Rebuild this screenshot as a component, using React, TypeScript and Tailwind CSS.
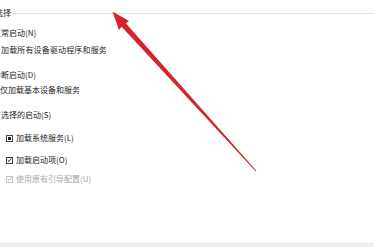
import React from "react";

// msconfig "启动选择" group box, cropped on the left, with a red annotation arrow.
const font = { fontFamily: '"Noto Sans CJK SC", "Noto Sans", sans-serif' };

function Box({ mark, disabled }: { mark: "square" | "check"; disabled?: boolean }) {
  const c = disabled ? "#b4b4b4" : "#333";
  return (
    <span
      className={`inline-flex items-center justify-center w-[7px] h-[7px] border bg-white ${
        disabled ? "border-[#c4c4c4]" : "border-[#444]"
      }`}
    >
      {mark === "square" ? (
        <span className="block w-[3px] h-[3px] bg-[#222]" />
      ) : (
        <svg width="6" height="6" viewBox="0 0 6 6">
          <path d="M0.8 3.1 L2.4 4.7 L5.3 1.1" fill="none" stroke={c} strokeWidth="1.2" />
        </svg>
      )}
    </span>
  );
}

export default function App() {
  return (
    <div className="relative w-[374px] h-[247px] bg-white overflow-hidden flex flex-col text-[8px] leading-[10px] text-[#262626]" style={font}>
      <div className="flex-1 flex flex-col">
        <div className="mt-[8px] h-[10px] flex items-center gap-[1px]">
          <span className="ml-[-21px] whitespace-nowrap">启动选择</span>
          <div className="flex-1 h-px bg-[#e2e2e2]" />
        </div>

        <div className="mt-[10px] h-[10px] ml-[-7px] whitespace-nowrap">正常启动(N)</div>
        <div className="mt-[7px] h-[10px] ml-[1px] whitespace-nowrap tracking-[0.15px]">加载所有设备驱动程序和服务</div>

        <div className="mt-[15px] h-[10px] ml-[-7px] whitespace-nowrap">诊断启动(D)</div>
        <div className="mt-[5px] h-[10px] ml-0 whitespace-nowrap">仅加载基本设备和服务</div>

        <div className="mt-[15px] h-[10px] ml-[-7px] whitespace-nowrap">有选择的启动(S)</div>

        <div className="mt-[13px] h-[10px] flex items-center pl-[6px] gap-[3px]">
          <Box mark="square" />
          <span className="whitespace-nowrap">加载系统服务(L)</span>
        </div>
        <div className="mt-[12px] h-[10px] flex items-center pl-[6px] gap-[3px]">
          <Box mark="check" />
          <span className="whitespace-nowrap">加载启动项(O)</span>
        </div>
        <div className="mt-[9px] h-[10px] flex items-center pl-[6px] gap-[3px] text-[#a8a8a8]">
          <Box mark="check" disabled />
          <span className="whitespace-nowrap">使用原有引导配置(U)</span>
        </div>
      </div>

      <div className="h-[4px] bg-[#f0f0f0] border-t border-[#e4e4e4]" />

      <svg className="absolute inset-0 pointer-events-none" width="374" height="247" viewBox="0 0 374 247">
        <polygon
          points="112.5,11.5 129,21 125.8,23.2 256.4,170.7 255.6,171.3 121.6,26.8 119,30"
          fill="#d6232e"
        />
      </svg>
    </div>
  );
}
